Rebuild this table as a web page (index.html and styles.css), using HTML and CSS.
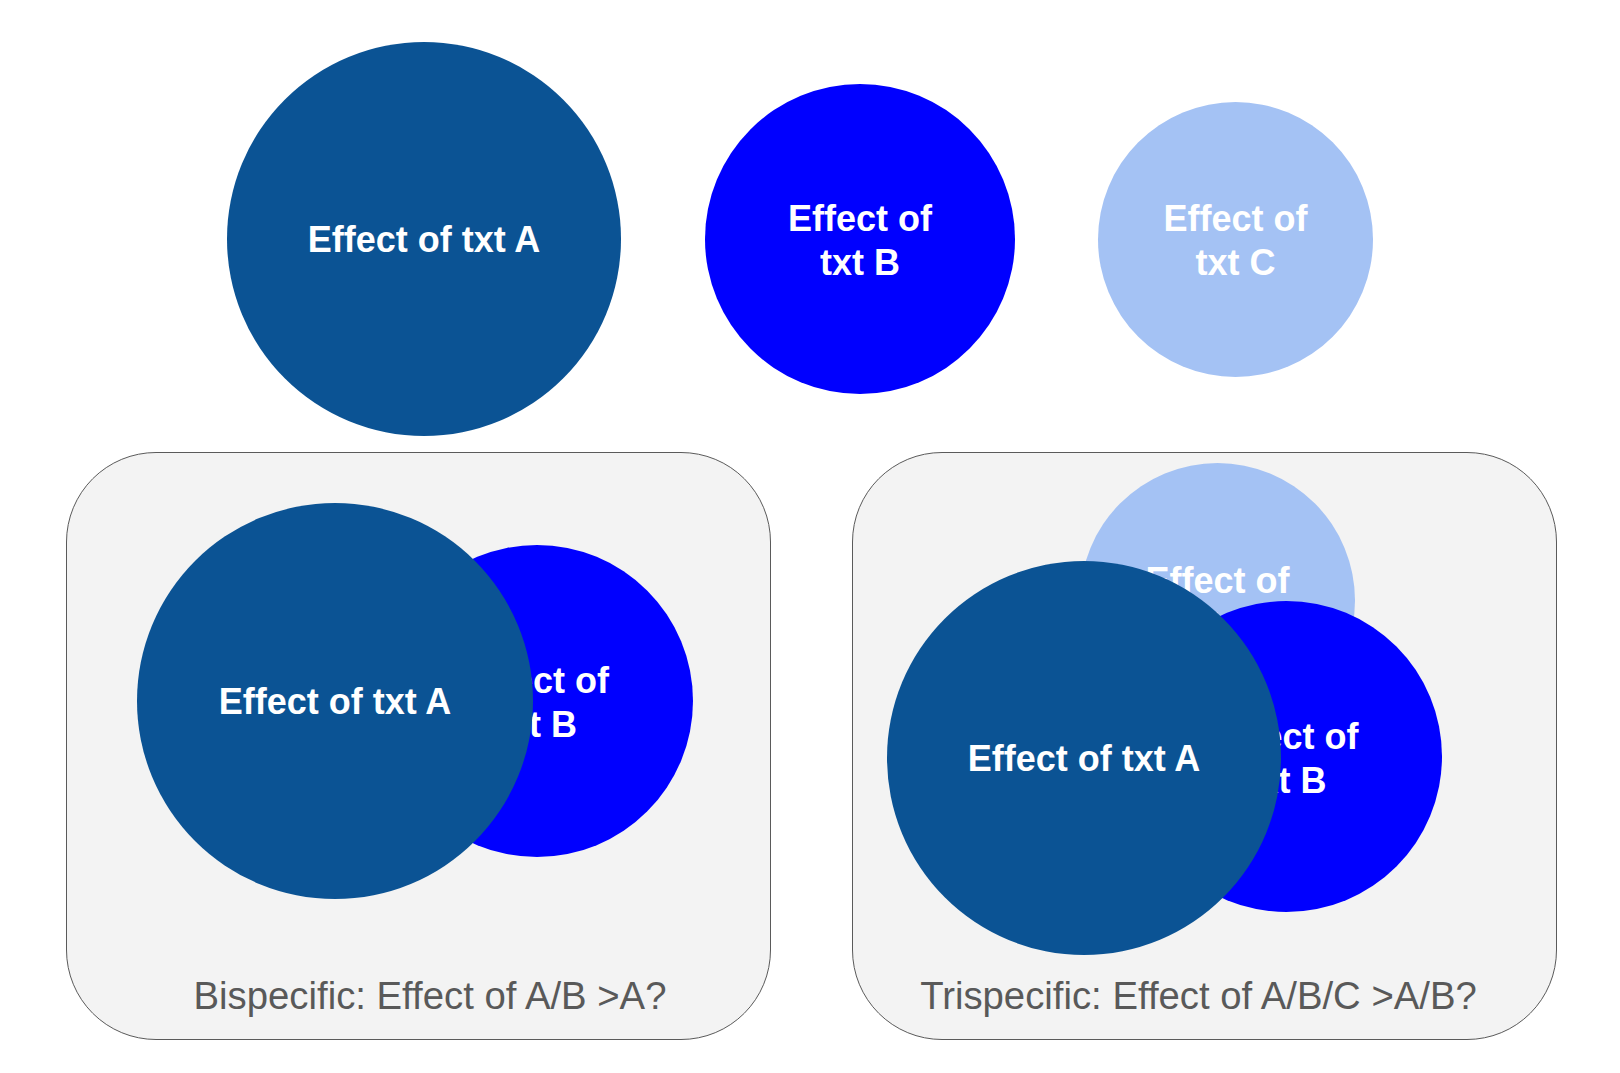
FILE: index.html
```html
<!DOCTYPE html>
<html lang="en">
<head>
<meta charset="utf-8">
<title>Bispecific and Trispecific effects</title>
<link rel="stylesheet" href="styles.css">
</head>
<body>
  <div class="top-row">
    <div class="circle circle-a">Effect of txt A</div>
    <div class="circle circle-b two-line">Effect of<br>txt B</div>
    <div class="circle circle-c two-line">Effect of<br>txt C</div>
  </div>
  <div class="panels">
    <div class="panel">
      <div class="stage">
        <div class="circle circle-b two-line bi-b">Effect of<br>txt B</div>
        <div class="circle circle-a bi-a">Effect of txt A</div>
      </div>
      <div class="label label-bi">Bispecific: Effect of A/B &gt;A?</div>
    </div>
    <div class="panel">
      <div class="stage">
        <div class="circle circle-c two-line tri-c">Effect of<br>txt C</div>
        <div class="circle circle-b two-line tri-b">Effect of<br>txt B</div>
        <div class="circle circle-a tri-a">Effect of txt A</div>
      </div>
      <div class="label label-tri">Trispecific: Effect of A/B/C &gt;A/B?</div>
    </div>
  </div>
</body>
</html>
```

FILE: styles.css
```css
html, body {
  margin: 0;
  padding: 0;
  background: #ffffff;
}

body {
  width: 1620px;
  height: 1073px;
  overflow: hidden;
  font-family: "Liberation Sans", Arial, sans-serif;
}

.top-row {
  display: flex;
  align-items: center;
  gap: 84px;
  height: 394px;
  padding: 42px 0 0 227px;
}

.circle {
  flex: none;
  display: flex;
  align-items: center;
  justify-content: center;
  text-align: center;
  border-radius: 50%;
  color: #ffffff;
  font-weight: bold;
  font-size: 36px;
  line-height: 44px;
  box-sizing: border-box;
}

.two-line {
  padding-top: 4px;
}

.circle-a {
  width: 394px;
  height: 394px;
  background: #0b5394;
  padding-top: 2px;
}

.circle-b {
  width: 310px;
  height: 310px;
  background: #0000ff;
}

.circle-c {
  width: 275px;
  height: 275px;
  background: #a4c2f4;
}

.top-row .circle-c {
  margin-left: -1px;
}

.panels {
  display: flex;
  gap: 81px;
  margin-top: 16px;
  padding-left: 66px;
}

.panel {
  position: relative;
  width: 705px;
  height: 588px;
  box-sizing: border-box;
  border: 1.5px solid #5a5a5a;
  border-radius: 90px;
  background: #f3f3f3;
  display: flex;
  flex-direction: column;
  justify-content: flex-end;
  padding-bottom: 21px;
}

.stage {
  position: absolute;
  inset: 0;
}

.stage .circle {
  position: absolute;
}

.bi-a {
  left: 70px;
  top: 50px;
  width: 396px;
  height: 396px;
}

.bi-b {
  left: 314px;
  top: 92px;
  width: 312px;
  height: 312px;
}

.tri-c {
  left: 227px;
  top: 10px;
}

.tri-b {
  left: 278px;
  top: 148px;
  width: 311px;
  height: 311px;
}

.tri-a {
  left: 34px;
  top: 108px;
}

.label {
  position: relative;
  text-align: center;
  color: #595959;
  font-size: 38.3px;
  line-height: 44px;
  white-space: nowrap;
}

.label-bi {
  padding-left: 23px;
}

.label-tri {
  padding-right: 12px;
}
```
